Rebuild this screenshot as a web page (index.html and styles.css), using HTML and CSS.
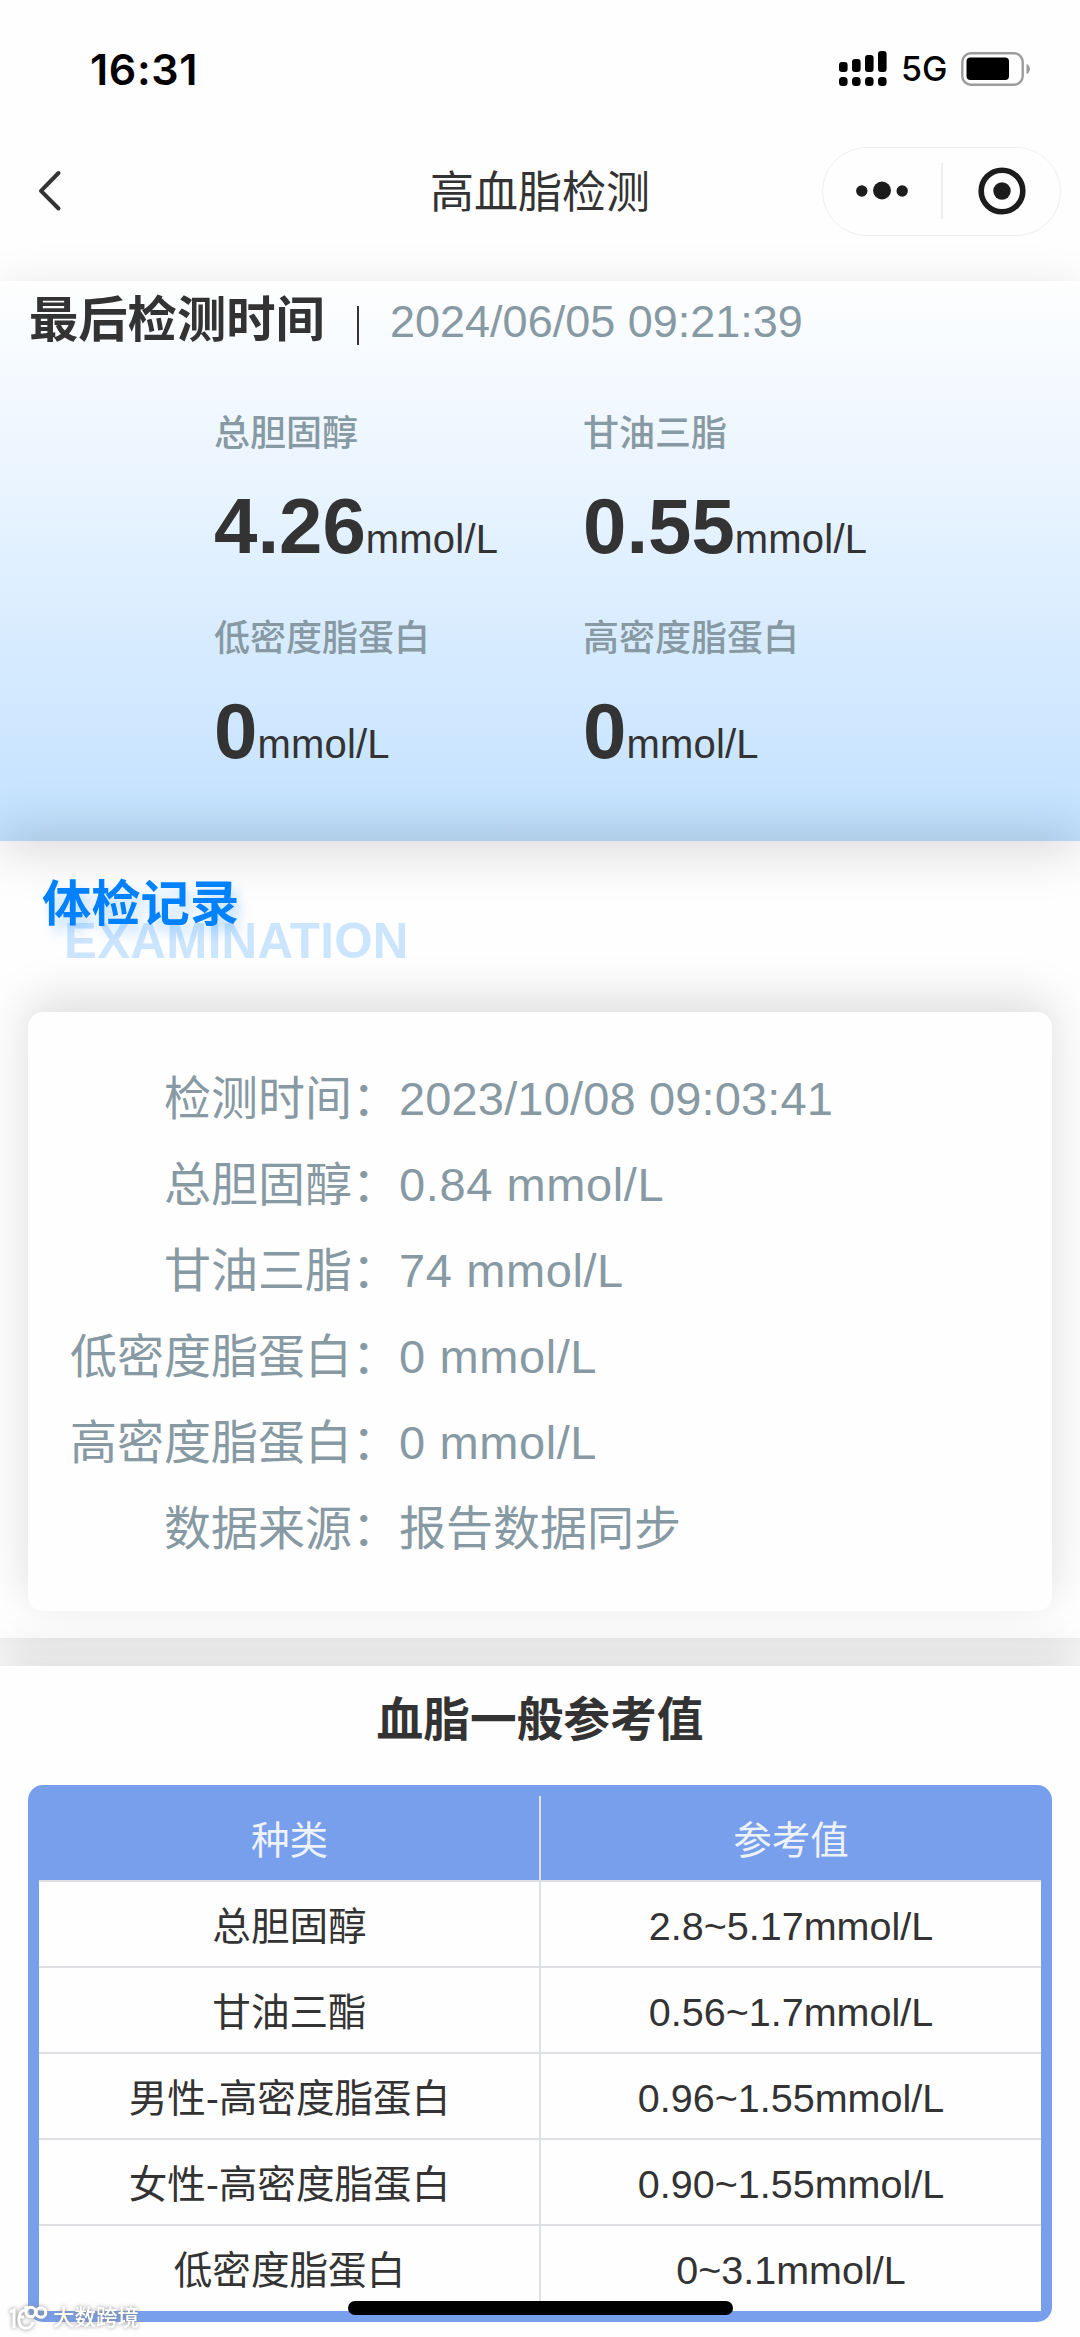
FILE: index.html
```html
<!DOCTYPE html>
<html lang="zh-CN">
<head>
<meta charset="utf-8">
<title>高血脂检测</title>
<link rel="stylesheet" href="styles.css">
</head>
<body>
<header class="top">
  <div class="status">
    <span class="clock">16:31</span>
    <svg class="signal" width="48" height="36" viewBox="0 0 48 36">
      <rect x="0" y="11" width="8.6" height="10" rx="3"/><rect x="13" y="8" width="8.6" height="13" rx="3"/><rect x="26" y="4" width="8.6" height="17" rx="3"/><rect x="39" y="0" width="8.6" height="21" rx="3"/>
      <rect x="0" y="26" width="8.6" height="9" rx="3.5"/><rect x="13" y="26" width="8.6" height="9" rx="3.5"/><rect x="26" y="26" width="8.6" height="9" rx="3.5"/><rect x="39" y="26" width="8.6" height="9" rx="3.5"/>
    </svg>
    <span class="net">5G</span>
    <svg class="battery" width="70" height="34" viewBox="0 0 70 34">
      <rect x="1.3" y="1.3" width="60.4" height="31.4" rx="8.5" fill="none" stroke="#9c9c9c" stroke-width="2.4"/>
      <rect x="5.5" y="5.5" width="42.5" height="22.5" rx="4"/>
      <path d="M65.500 12c4.600 1.600 4.600 8.400 0 10z" fill="#9c9c9c"/>
    </svg>
  </div>
  <nav class="nav">
    <svg class="back" width="26" height="42" viewBox="0 0 26 42"><path d="M21.500 3L4 20.800L21.500 38.500" fill="none" stroke="#333" stroke-width="4" stroke-linecap="round" stroke-linejoin="round"/></svg>
    <h1 class="nav-title">高血脂检测</h1>
    <div class="capsule">
      <svg width="52" height="20" viewBox="0 0 52 20" fill="#1c1c1c"><circle cx="5.800" cy="10" r="5.700"/><circle cx="26" cy="9.500" r="9"/><circle cx="46.200" cy="10" r="5.700"/></svg>
      <i class="capsule-line"></i>
      <svg width="48" height="48" viewBox="0 0 48 48"><circle cx="24" cy="24" r="20.800" fill="none" stroke="#1c1c1c" stroke-width="5.600"/><circle cx="24" cy="24" r="8.700" fill="#1c1c1c"/></svg>
    </div>
  </nav>
</header>

<section class="latest">
  <div class="latest-head"><h2 class="latest-title">最后检测时间</h2><i class="bar"></i><time class="latest-time">2024/06/05 09:21:39</time></div>
  <div class="metrics">
    <div class="metric"><div class="metric-name">总胆固醇</div><div class="metric-value">4.26<span class="unit">mmol/L</span></div></div>
    <div class="metric"><div class="metric-name">甘油三脂</div><div class="metric-value">0.55<span class="unit">mmol/L</span></div></div>
    <div class="metric"><div class="metric-name">低密度脂蛋白</div><div class="metric-value">0<span class="unit">mmol/L</span></div></div>
    <div class="metric"><div class="metric-name">高密度脂蛋白</div><div class="metric-value">0<span class="unit">mmol/L</span></div></div>
  </div>
</section>

<section class="records">
  <div class="heading"><span class="heading-en">EXAMINATION</span><h2 class="heading-cn">体检记录</h2></div>
  <dl class="card">
    <dt>检测时间：</dt><dd class="date">2023/10/08 09:03:41</dd>
    <dt>总胆固醇：</dt><dd>0.84 mmol/L</dd>
    <dt>甘油三脂：</dt><dd>74 mmol/L</dd>
    <dt>低密度脂蛋白：</dt><dd>0 mmol/L</dd>
    <dt>高密度脂蛋白：</dt><dd>0 mmol/L</dd>
    <dt>数据来源：</dt><dd class="source">报告数据同步</dd>
  </dl>
</section>
<div class="gap"></div>

<section class="reference">
  <h2 class="reference-title">血脂一般参考值</h2>
  <div class="table">
    <div class="row head"><div>种类</div><div>参考值</div></div>
    <div class="row"><div>总胆固醇</div><div class="num">2.8~5.17mmol/L</div></div>
    <div class="row"><div>甘油三酯</div><div class="num">0.56~1.7mmol/L</div></div>
    <div class="row"><div>男性-高密度脂蛋白</div><div class="num">0.96~1.55mmol/L</div></div>
    <div class="row"><div>女性-高密度脂蛋白</div><div class="num">0.90~1.55mmol/L</div></div>
    <div class="row"><div>低密度脂蛋白</div><div class="num">0~3.1mmol/L</div></div>
  </div>
</section>

<div class="watermark">
  <svg width="42" height="30" viewBox="0 0 42 30" fill="none" stroke="#fff" stroke-width="3"><path d="M2 9l4-2v18M17 7c-8 1-8 17-1 18c5 1 8-2 9-6M11 14h5"/><path d="M18 3v6a4.800 4.800 0 1 0 4.800-4.800c-2 0-4 1.500-4.800 4"/><circle cx="33" cy="9.500" r="4.800"/></svg>
  <span>大数跨境</span>
</div>
<div class="home-indicator"></div>
</body>
</html>
```
FILE: styles.css
```css
* { box-sizing: border-box; margin: 0; padding: 0; }
body {
  position: relative;
  width: 1080px;
  height: 2337px;
  overflow: hidden;
  background: #fefefe;
  color: #333;
  font-family: "Liberation Sans", "Noto Sans CJK SC", sans-serif;
}
h1, h2 { font-weight: 400; }
svg { display: block; }

.top { height: 281px; }
.status { display: flex; align-items: center; height: 137px; padding: 0 49px 0 90px; }
.clock { flex: 1; font: 600 43px/58px Inter, sans-serif; color: #000; letter-spacing: 0.6px; }
.signal { margin-right: 14px; }
.net { width: 60px; font: 500 34px/40px Inter, sans-serif; color: #000; padding-top: 1px; }
.nav {
  display: grid;
  grid-template-columns: 258px 564px 239px;
  align-items: center;
  height: 108px;
}
.back { margin-left: 37px; }
.nav-title { padding-top: 3px; font-size: 44px; line-height: 60px; text-align: center; }
.capsule {
  display: flex;
  align-items: center;
  height: 89px;
  padding-left: 33px;
  border: 1px solid #efefef;
  border-radius: 45px;
}
.capsule-line { width: 2px; height: 56px; margin: 0 35px 0 33px; background: #eee; }

.latest {
  height: 560px;
  padding: 8px 0 0 29px;
  background: linear-gradient(#fefefe, #edf6ff 30%, #c2e1ff);
  box-shadow: 0 12px 48px rgba(0, 0, 0, .137);
}
.latest-head { display: flex; align-items: center; height: 60px; }
.latest-title { width: 328px; padding-top: 2px; font-size: 49.300px; font-weight: 700; line-height: 60px; }
.bar { width: 2px; height: 39px; margin: 13px 31px 0 0; background: #333; }
.latest-time { font-size: 45px; line-height: 60px; padding-top: 6px; color: #8799a3; }
.metrics {
  display: grid;
  grid-template-columns: 369px 369px;
  grid-auto-rows: 205px;
  padding: 59px 0 0 185px;
}
.metric-name { font-size: 36px; font-weight: 500; line-height: 52px; color: #8799a3; }
.metric-value { font-size: 78px; font-weight: 700; line-height: 90px; padding-top: 21px; white-space: nowrap; }
.unit { font-size: 40px; font-weight: 400; letter-spacing: .2px; }

.records { height: 797px; padding: 0 28px; box-shadow: 0 -12px 48px rgba(0, 0, 0, .137); }
.heading { position: relative; height: 171px; padding: 68px 0 0 36px; }
.heading-en { display: block; font-size: 49.300px; font-weight: 700; line-height: 64px; letter-spacing: .3px; color: #cce5ff; }
.heading-cn {
  position: absolute;
  left: 14px;
  top: 27px;
  font-size: 49.300px;
  font-weight: 700;
  line-height: 72px;
  color: #0081ff;
  text-shadow: 6px 9px 12px rgba(0, 129, 255, .24);
}
.card {
  display: grid;
  grid-template-columns: 371px 1fr;
  grid-auto-rows: 86px;
  height: 599px;
  padding-top: 44px;
  background: #fefefe;
  border-radius: 15px;
  box-shadow: 0 -12px 48px rgba(0, 0, 0, .137);
  color: #8799a3;
  font-size: 47px;
  line-height: 86px;
}
.card dt { text-align: right; white-space: nowrap; }
.card dd { letter-spacing: .6px; }
.card .date { letter-spacing: .15px; }
.card .source { letter-spacing: 0; }

.gap { height: 28px; background: linear-gradient(rgba(0, 0, 0, .03), transparent); }

.reference {
  height: 671px;
  padding: 24px 28px 0;
  background: #fefefe;
  box-shadow: 0 -10px 40px rgba(0, 0, 0, .137);
}
.reference-title { height: 95px; font-size: 46.700px; font-weight: 700; line-height: 60px; text-align: center; }
.table { height: 537px; padding: 11px; background: #789fec; border-radius: 15px; }
.row {
  display: grid;
  grid-template-columns: 1fr 1fr;
  height: 86px;
  background: #fefefe;
  border-bottom: 2px solid #dfe0e3;
  font-size: 38.600px;
  line-height: 90px;
  text-align: center;
}
.row > div { height: 84px; }
.row > div + div { border-left: 2px solid #dfe1e5; margin-left: -1px; }
.row .num { font-size: 39.500px; line-height: 88px; }
.row.head { background: #789fec; color: #edf2fd; }
.row:last-child { border-bottom: 0; height: 85px; }

.watermark {
  position: absolute;
  left: 8px;
  top: 2299px;
  display: flex;
  align-items: center;
  gap: 3px;
  color: #fff;
  font-size: 21.500px;
  font-weight: 500;
  line-height: 38px;
  filter: drop-shadow(0 0 2px #888);
}
.home-indicator {
  position: absolute;
  left: 348px;
  top: 2301px;
  width: 385px;
  height: 14px;
  border-radius: 7px;
  background: #000;
}
```
